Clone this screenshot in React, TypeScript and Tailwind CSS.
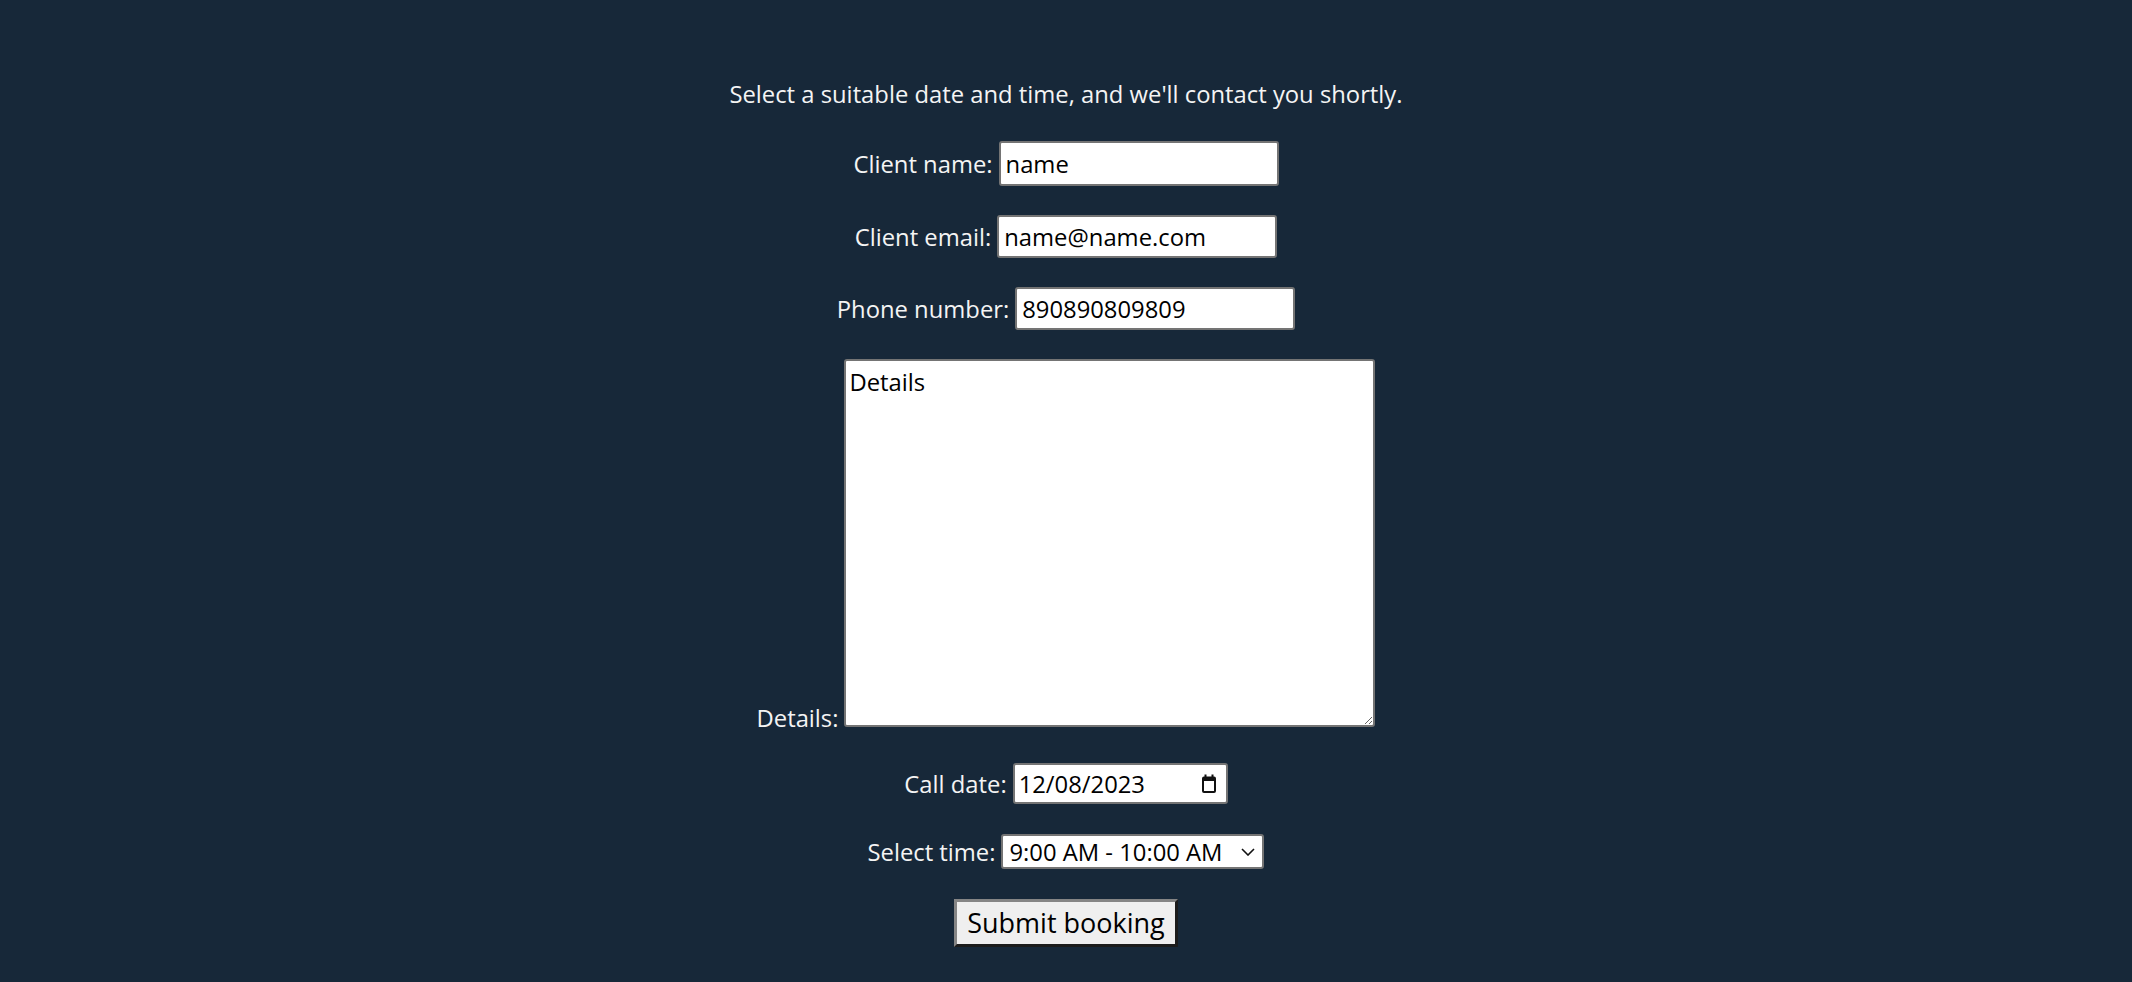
import React from "react";

const font = { fontFamily: '"Open Sans", "Noto Sans", sans-serif' };

function Row({ label, children, className = "" }: { label: string; children: React.ReactNode; className?: string }) {
  return (
    <div className={"flex items-center justify-center gap-[6px] " + className}>
      <span className="text-[#f4f4f4]">{label}</span>
      {children}
    </div>
  );
}

const inputCls =
  "w-[280px] rounded-[3px] border-2 border-[#747474] bg-white px-[5px] text-black outline-none";

export default function App() {
  return (
    <div
      className="min-h-[982px] w-full bg-[#172839] text-[23.8px] leading-[32px]"
      style={font}
    >
      <div className="flex flex-col items-center gap-[29px] pt-[78px]">
        <p className="text-center text-[#f4f4f4]">
          Select a suitable date and time, and we'll contact you shortly.
        </p>
        <Row label="Client name:" className="mt-[2px]">
          <input className={inputCls + " h-[45px]"} defaultValue="name" />
        </Row>
        <Row label="Client email:">
          <input className={inputCls + " h-[43px]"} defaultValue="name@name.com" />
        </Row>
        <Row label="Phone number:">
          <input className={inputCls + " h-[43px]"} defaultValue="890890809809" />
        </Row>
        <div className="flex items-end justify-center gap-[6px] pb-[7px]">
          <span className="mb-[-7px] text-[#f4f4f4]">Details:</span>
          <textarea
            className="h-[368px] w-[531px] resize rounded-[3px] border-2 border-[#747474] bg-white px-[3px] py-[5px] text-black outline-none"
            defaultValue="Details"
          />
        </div>
        <Row label="Call date:">
          <div className="flex h-[41px] w-[215px] items-center justify-between rounded-[3px] border-2 border-[#747474] bg-white pl-[4px] pr-[10px] text-black">
            <span>12/08/2023</span>
            <svg width="14" height="19" viewBox="0 0 14 19" fill="none">
              <rect x="1" y="3.5" width="12" height="14.5" rx="1" stroke="#111" strokeWidth="2" />
              <rect x="1" y="3.5" width="12" height="3.5" fill="#111" />
              <rect x="2.5" y="0.5" width="2" height="3.5" fill="#111" />
              <rect x="9.5" y="0.5" width="2" height="3.5" fill="#111" />
            </svg>
          </div>
        </Row>
        <Row label="Select time:" className="mt-[1px]">
          <div className="flex h-[35px] w-[263px] items-center justify-between rounded-[3px] border-2 border-[#747474] bg-white pl-[6px] pr-[7px] text-black">
            <span>9:00 AM - 10:00 AM</span>
            <svg width="14" height="8" viewBox="0 0 14 8" fill="none">
              <path d="M1 1l6 6 6-6" stroke="#111" strokeWidth="1.6" />
            </svg>
          </div>
        </Row>
        <button className="mt-[1px] h-[48px] w-[224px] border-[3px] border-b-[#1c1c1c] border-l-[#858585] border-r-[#1c1c1c] border-t-[#858585] bg-[#efefef] text-[27px] leading-[36px] text-black">
          Submit booking
        </button>
      </div>
    </div>
  );
}
